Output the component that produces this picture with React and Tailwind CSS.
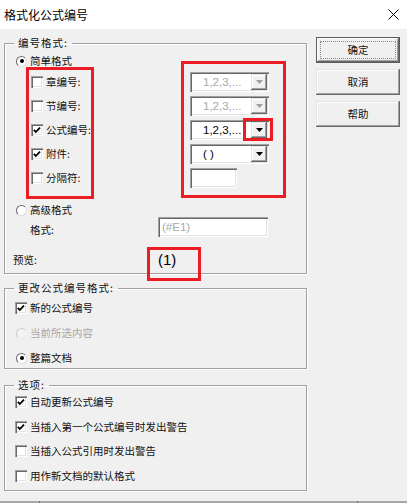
const sunken = "shadow-[inset_1px_1px_0_#a0a0a0,inset_2px_2px_0_#696969,inset_-1px_-1px_0_#fff,inset_-2px_-2px_0_#e3e3e3]";
const raised = "shadow-[inset_-1px_-1px_0_#696969,inset_1px_1px_0_#e3e3e3,inset_-2px_-2px_0_#a0a0a0,inset_2px_2px_0_#fff]";

function Check({ checked }) {
    return (
        <span className={`w-[12px] h-[12px] shrink-0 bg-white flex items-center justify-center ${sunken}`}>
            {checked && (
                <svg width="12" height="12" viewBox="0 0 12 12">
                    <polyline points="2.8,5.8 4.8,8 9,3.6" fill="none" stroke="#000" strokeWidth="1.8" />
                </svg>
            )}
        </span>
    );
}

function Radio({ checked, disabled }) {
    return (
        <span
            className={`w-[11px] h-[11px] shrink-0 rounded-full border flex items-center justify-center ${disabled
                ? "bg-[#f4f4f4] border-t-[#c8c8c8] border-l-[#c8c8c8] border-b-[#ececec] border-r-[#ececec]"
                : "bg-white border-t-[#6a6a6a] border-l-[#6a6a6a] border-b-[#dcdcdc] border-r-[#dcdcdc]"
                }`}
        >
            {checked && <span className="w-[4px] h-[4px] rounded-full bg-black" />}
        </span>
    );
}

function Combo({ value, disabled }) {
    return (
        <div className={`w-[79px] h-[20px] bg-white flex items-center ${sunken}`}>
            <span className={`flex-1 pl-[13px] text-[11.5px] leading-[14px] font-['Liberation_Sans',sans-serif] ${disabled ? "text-[#a8a8a8]" : "text-black"}`}>
                {value}
            </span>
            <span className={`w-[16px] h-[16px] mr-[2px] bg-[#f0f0f0] flex items-center justify-center ${raised}`}>
                <svg width="7" height="4" viewBox="0 0 7 4">
                    <polygon points="0,0 7,0 3.5,4" fill={disabled ? "#a0a0a0" : "#000"} />
                </svg>
            </span>
        </div>
    );
}

function Field({ value, w, muted }) {
    return (
        <div className={`h-[20px] bg-white flex items-center pl-[4px] ${w} ${sunken}`}>
            <span className={`text-[11.5px] leading-[14px] font-['Liberation_Sans',sans-serif] ${muted ? "text-[#a8a8a8]" : "text-black"}`}>
                {value}
            </span>
        </div>
    );
}

function Btn({ children, primary }) {
    if (primary) {
        return (
            <div className="h-[26px] border border-[#5a5a5a] bg-[#f0f0f0] p-[3px] shadow-[inset_-1px_-1px_0_#696969,inset_1px_1px_0_#fff,inset_-2px_-2px_0_#a0a0a0]">
                <div className="h-full border border-dotted border-[#8a8a8a] flex items-center justify-center text-[10.5px] leading-[14px]">
                    {children}
                </div>
            </div>
        );
    }
    return (
        <div className={`h-[26px] bg-[#f0f0f0] flex items-center justify-center text-[10.5px] leading-[14px] ${raised}`}>
            {children}
        </div>
    );
}

function Group({ title, className, children }) {
    return (
        <fieldset className={`border border-[#a0a0a0] shadow-[inset_1px_1px_0_#fff,1px_1px_0_#fff] ${className}`}>
            <legend className="ml-[9px] px-[4px] text-[10.5px] leading-[14px] tracking-[1px]">{title}</legend>
            {children}
        </fieldset>
    );
}

const rows = [
    { label: "章编号:", checked: false, field: <Combo value="1,2,3,..." disabled /> },
    { label: "节编号:", checked: false, field: <Combo value="1,2,3,..." disabled /> },
    { label: "公式编号:", checked: true, field: <Combo value="1,2,3,..." /> },
    { label: "附件:", checked: true, field: <Combo value="( )" /> },
    { label: "分隔符:", checked: false, field: <Field value="" w="w-[47px]" /> },
];

export default function App() {
    return (
        <div className="relative w-[407px] h-[503px] bg-[#f0f0f0] text-[#111] font-['Noto_Sans_CJK_SC',sans-serif] flex flex-col overflow-hidden">
            <div className="h-[29px] shrink-0 bg-white flex items-center justify-between pl-[4px] pr-[8px]">
                <span className="text-[12px] leading-[16px] text-black">格式化公式编号</span>
                <svg width="11" height="11" viewBox="0 0 11 11">
                    <path d="M0.5 0.5L10.5 10.5M10.5 0.5L0.5 10.5" stroke="#000" strokeWidth="1" />
                </svg>
            </div>

            <div className="flex pl-[4px] text-[10.5px] leading-[14px]">
                <div className="w-[303px] flex flex-col">
                    <Group title="编号格式:" className="mt-[7px] pb-[3px]">
                        <div className="h-[20px] pt-[2px] pl-[11px] flex items-center gap-[3px]">
                            <Radio checked />
                            <span>简单格式</span>
                        </div>
                        {rows.map(r => (
                            <div key={r.label} className="h-[24px] flex items-center">
                                <div className="w-[185px] pl-[26px] flex items-center gap-[3px]">
                                    <Check checked={r.checked} />
                                    <span>{r.label}</span>
                                </div>
                                {r.field}
                            </div>
                        ))}
                        <div className="mt-[13px] h-[14px] pl-[11px] flex items-center gap-[3px]">
                            <Radio />
                            <span>高级格式</span>
                        </div>
                        <div className="h-[20px] flex">
                            <span className="w-[153px] pl-[25px] self-end">格式:</span>
                            <Field value="(#E1)" w="w-[110px]" muted />
                        </div>
                        <div className="mt-[13px] h-[20px] flex items-center">
                            <span className="w-[153px] pl-[8px]">预览:</span>
                            <span className="text-[15px] leading-[18px] font-['Liberation_Sans',sans-serif] text-black">(1)</span>
                        </div>
                    </Group>

                    <Group title="更改公式编号格式:" className="mt-[7px] pt-[5px] pb-[2px]">
                        <div className="flex flex-col gap-[9px]">
                            <div className="h-[16px] pl-[10px] flex items-center gap-[3px]">
                                <Check checked />
                                <span>新的公式编号</span>
                            </div>
                            <div className="h-[16px] pl-[11px] flex items-center gap-[3px] text-[#a8a8a8]">
                                <Radio disabled />
                                <span>当前所选内容</span>
                            </div>
                            <div className="h-[16px] pl-[11px] flex items-center gap-[3px]">
                                <Radio checked />
                                <span>整篇文档</span>
                            </div>
                        </div>
                    </Group>

                    <Group title="选项:" className="mt-[9px] pt-[2px] pb-[6px]">
                        <div className="h-[16px] pl-[10px] flex items-center gap-[3px]">
                            <Check checked />
                            <span>自动更新公式编号</span>
                        </div>
                        <div className="mt-[9px] h-[16px] pl-[10px] flex items-center gap-[3px]">
                            <Check checked />
                            <span>当插入第一个公式编号时发出警告</span>
                        </div>
                        <div className="mt-[8px] h-[16px] pl-[10px] flex items-center gap-[3px]">
                            <Check />
                            <span>当插入公式引用时发出警告</span>
                        </div>
                        <div className="mt-[9px] h-[16px] pl-[10px] flex items-center gap-[3px]">
                            <Check />
                            <span>用作新文档的默认格式</span>
                        </div>
                    </Group>
                </div>

                <div className="ml-[9px] w-[84px] mt-[8px] flex flex-col gap-[6px]">
                    <Btn primary>确定</Btn>
                    <Btn>取消</Btn>
                    <Btn>帮助</Btn>
                </div>
            </div>

            <div className="mt-auto h-[2px] bg-[#a8a8a8] flex">
                <div className="w-[39px]" />
                <div className="w-px bg-[#6e6e6e]" />
                <div className="w-[317px]" />
                <div className="w-px bg-[#6e6e6e]" />
            </div>

            {/* red annotation boxes */}
            <div className="absolute left-[26px] top-[67px] w-[68px] h-[132px] border-[3px] border-[#ec1c24]" />
            <div className="absolute left-[181px] top-[61px] w-[105px] h-[137px] border-[3px] border-[#ec1c24]" />
            <div className="absolute left-[243px] top-[118px] w-[30px] h-[23px] border-[3px] border-[#ec1c24]" />
            <div className="absolute left-[147px] top-[247px] w-[54px] h-[34px] border-[3px] border-[#ec1c24]" />
        </div>
    );
}
